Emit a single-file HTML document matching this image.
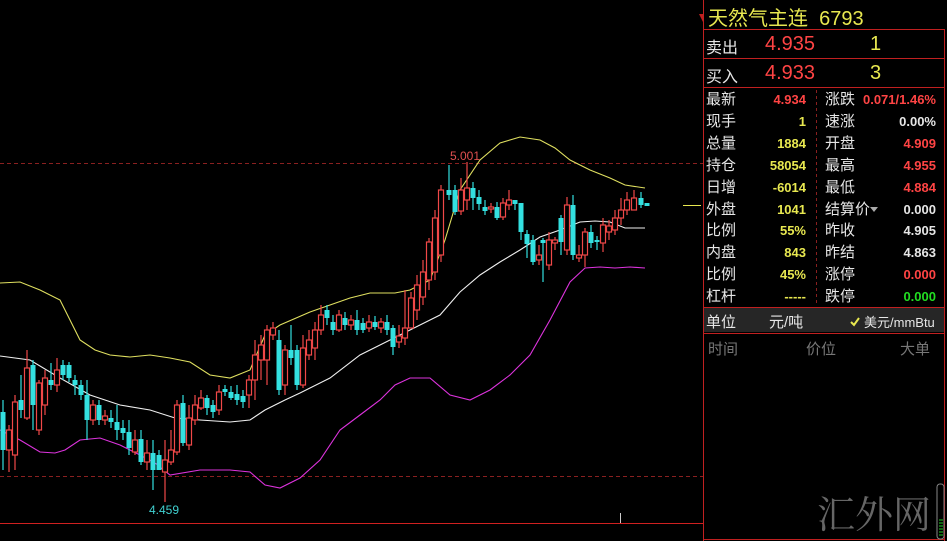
<!DOCTYPE html>
<html><head><meta charset="utf-8"><style>
body{margin:0;width:947px;height:541px;background:#000;overflow:hidden;position:relative;font-family:"Liberation Sans","Noto Sans CJK SC",sans-serif}
.p{position:absolute;white-space:nowrap}
.w{color:#e6e6e6}.r{color:#ff4444}.y{color:#e8e850}.g{color:#22dd22}
.b{font-weight:bold;font-size:13px}
</style></head><body>
<svg class="p" style="left:0;top:0" width="947" height="541">
<line x1="0" y1="163.5" x2="703" y2="163.5" stroke="#8a2020" stroke-dasharray="4,3"/>
<line x1="0" y1="476.5" x2="703" y2="476.5" stroke="#8a2020" stroke-dasharray="4,3"/>
<line x1="0" y1="523.5" x2="703" y2="523.5" stroke="#d02020"/>
<line x1="620.5" y1="513" x2="620.5" y2="523" stroke="#ccc"/>
<line x1="683" y1="205.5" x2="701" y2="205.5" stroke="#e8e850"/>
<polygon points="699,14 703,14 703,22" fill="#c02020"/>
<polyline fill="none" stroke="#e0e060" stroke-width="1.1" points="0,283 20,282 40,290 60,300 80,340 95,350 110,355 130,357 150,355 170,358 190,362 210,375 230,378 250,370 265,335 280,325 310,312 350,298 370,293 395,293 410,290 430,280 445,240 460,190 480,160 500,143 520,137 540,140 555,148 570,160 590,170 610,178 625,185 645,188"/>
<polyline fill="none" stroke="#f0f0f0" stroke-width="1.1" points="0,356 30,360 60,378 90,395 120,405 150,410 175,418 200,420 230,422 250,420 265,410 285,400 300,393 330,378 360,355 380,345 400,335 420,325 440,315 460,292 480,275 500,262 520,250 540,237 560,230 580,222 595,221 610,222 625,228 645,228"/>
<polyline fill="none" stroke="#dd33dd" stroke-width="1.1" points="0,430 20,440 40,452 55,453 65,450 80,440 100,438 120,445 140,455 155,463 170,475 200,470 230,470 250,472 265,485 280,488 300,478 320,460 340,430 360,415 380,400 395,385 410,378 430,378 450,395 470,400 490,390 510,375 530,355 550,320 570,282 585,268 600,267 615,268 630,267 645,268"/>
<g stroke-width="1.2">
<line x1="3" y1="400" x2="3" y2="470" stroke="#33e0e0"/><rect x="0.5" y="412" width="5" height="38" fill="#33e0e0"/>
<line x1="9" y1="425" x2="9" y2="472" stroke="#f04848"/><rect x="6.5" y="430" width="5" height="20" fill="#000" stroke="#f04848"/>
<line x1="15" y1="395" x2="15" y2="470" stroke="#f04848"/><rect x="12.5" y="402" width="5" height="53" fill="#000" stroke="#f04848"/>
<line x1="21" y1="375" x2="21" y2="418" stroke="#33e0e0"/><rect x="18.5" y="400" width="5" height="10" fill="#33e0e0"/>
<line x1="27" y1="350" x2="27" y2="420" stroke="#f04848"/><rect x="24.5" y="368" width="5" height="50" fill="#000" stroke="#f04848"/>
<line x1="33" y1="360" x2="33" y2="430" stroke="#33e0e0"/><rect x="30.5" y="365" width="5" height="40" fill="#33e0e0"/>
<line x1="39" y1="380" x2="39" y2="435" stroke="#f04848"/><rect x="36.5" y="383" width="5" height="47" fill="#000" stroke="#f04848"/>
<line x1="45" y1="370" x2="45" y2="415" stroke="#f04848"/><rect x="42.5" y="378" width="5" height="27" fill="#000" stroke="#f04848"/>
<line x1="51" y1="363" x2="51" y2="390" stroke="#33e0e0"/><rect x="48.5" y="380" width="5" height="5" fill="#33e0e0"/>
<line x1="57" y1="358" x2="57" y2="392" stroke="#f04848"/><rect x="54.5" y="370" width="5" height="15" fill="#000" stroke="#f04848"/>
<line x1="63" y1="360" x2="63" y2="380" stroke="#33e0e0"/><rect x="60.5" y="365" width="5" height="10" fill="#33e0e0"/>
<line x1="69" y1="362" x2="69" y2="382" stroke="#33e0e0"/><rect x="66.5" y="365" width="5" height="13" fill="#33e0e0"/>
<line x1="75" y1="375" x2="75" y2="395" stroke="#33e0e0"/><rect x="72.5" y="380" width="5" height="5" fill="#33e0e0"/>
<line x1="81" y1="380" x2="81" y2="400" stroke="#33e0e0"/><rect x="78.5" y="385" width="5" height="10" fill="#33e0e0"/>
<line x1="87" y1="380" x2="87" y2="440" stroke="#33e0e0"/><rect x="84.5" y="395" width="5" height="25" fill="#33e0e0"/>
<line x1="93" y1="400" x2="93" y2="425" stroke="#f04848"/><rect x="90.5" y="405" width="5" height="15" fill="#000" stroke="#f04848"/>
<line x1="99" y1="400" x2="99" y2="425" stroke="#33e0e0"/><rect x="96.5" y="405" width="5" height="15" fill="#33e0e0"/>
<line x1="105" y1="410" x2="105" y2="425" stroke="#f04848"/><rect x="102.5" y="416" width="5" height="4" fill="#000" stroke="#f04848"/>
<line x1="111" y1="410" x2="111" y2="428" stroke="#33e0e0"/><rect x="108.5" y="418" width="5" height="4" fill="#33e0e0"/>
<line x1="117" y1="405" x2="117" y2="440" stroke="#33e0e0"/><rect x="114.5" y="422" width="5" height="8" fill="#33e0e0"/>
<line x1="123" y1="420" x2="123" y2="440" stroke="#33e0e0"/><rect x="120.5" y="428" width="5" height="5" fill="#33e0e0"/>
<line x1="129" y1="420" x2="129" y2="455" stroke="#33e0e0"/><rect x="126.5" y="432" width="5" height="16" fill="#33e0e0"/>
<line x1="135" y1="430" x2="135" y2="455" stroke="#f04848"/><rect x="132.5" y="440" width="5" height="12" fill="#000" stroke="#f04848"/>
<line x1="141" y1="430" x2="141" y2="465" stroke="#33e0e0"/><rect x="138.5" y="439" width="5" height="23" fill="#33e0e0"/>
<line x1="147" y1="440" x2="147" y2="470" stroke="#f04848"/><rect x="144.5" y="453" width="5" height="9" fill="#000" stroke="#f04848"/>
<line x1="153" y1="440" x2="153" y2="490" stroke="#33e0e0"/><rect x="150.5" y="453" width="5" height="17" fill="#33e0e0"/>
<line x1="159" y1="450" x2="159" y2="470" stroke="#33e0e0"/><rect x="156.5" y="455" width="5" height="15" fill="#33e0e0"/>
<line x1="165" y1="440" x2="165" y2="502" stroke="#f04848"/><rect x="162.5" y="460" width="5" height="12" fill="#000" stroke="#f04848"/>
<line x1="171" y1="430" x2="171" y2="465" stroke="#f04848"/><rect x="168.5" y="450" width="5" height="12" fill="#000" stroke="#f04848"/>
<line x1="177" y1="400" x2="177" y2="455" stroke="#f04848"/><rect x="174.5" y="405" width="5" height="47" fill="#000" stroke="#f04848"/>
<line x1="183" y1="395" x2="183" y2="446" stroke="#33e0e0"/><rect x="180.5" y="403" width="5" height="40" fill="#33e0e0"/>
<line x1="189" y1="405" x2="189" y2="450" stroke="#f04848"/><rect x="186.5" y="418" width="5" height="27" fill="#000" stroke="#f04848"/>
<line x1="195" y1="395" x2="195" y2="425" stroke="#f04848"/><rect x="192.5" y="405" width="5" height="15" fill="#000" stroke="#f04848"/>
<line x1="201" y1="390" x2="201" y2="410" stroke="#f04848"/><rect x="198.5" y="398" width="5" height="10" fill="#000" stroke="#f04848"/>
<line x1="207" y1="395" x2="207" y2="415" stroke="#33e0e0"/><rect x="204.5" y="398" width="5" height="10" fill="#33e0e0"/>
<line x1="213" y1="400" x2="213" y2="418" stroke="#33e0e0"/><rect x="210.5" y="405" width="5" height="7" fill="#33e0e0"/>
<line x1="219" y1="385" x2="219" y2="415" stroke="#f04848"/><rect x="216.5" y="392" width="5" height="18" fill="#000" stroke="#f04848"/>
<line x1="225" y1="385" x2="225" y2="396" stroke="#33e0e0"/><rect x="222.5" y="389" width="5" height="3" fill="#33e0e0"/>
<line x1="231" y1="386" x2="231" y2="400" stroke="#33e0e0"/><rect x="228.5" y="392" width="5" height="6" fill="#33e0e0"/>
<line x1="237" y1="385" x2="237" y2="405" stroke="#33e0e0"/><rect x="234.5" y="394" width="5" height="6" fill="#33e0e0"/>
<line x1="243" y1="390" x2="243" y2="408" stroke="#33e0e0"/><rect x="240.5" y="396" width="5" height="6" fill="#33e0e0"/>
<line x1="249" y1="375" x2="249" y2="408" stroke="#f04848"/><rect x="246.5" y="380" width="5" height="15" fill="#000" stroke="#f04848"/>
<line x1="255" y1="340" x2="255" y2="400" stroke="#f04848"/><rect x="252.5" y="355" width="5" height="25" fill="#000" stroke="#f04848"/>
<line x1="261" y1="335" x2="261" y2="380" stroke="#f04848"/><rect x="258.5" y="345" width="5" height="15" fill="#000" stroke="#f04848"/>
<line x1="267" y1="325" x2="267" y2="385" stroke="#f04848"/><rect x="264.5" y="330" width="5" height="30" fill="#000" stroke="#f04848"/>
<line x1="273" y1="322" x2="273" y2="340" stroke="#f04848"/><rect x="270.5" y="328" width="5" height="7" fill="#000" stroke="#f04848"/>
<line x1="279" y1="330" x2="279" y2="395" stroke="#33e0e0"/><rect x="276.5" y="340" width="5" height="50" fill="#33e0e0"/>
<line x1="285" y1="345" x2="285" y2="395" stroke="#f04848"/><rect x="282.5" y="350" width="5" height="35" fill="#000" stroke="#f04848"/>
<line x1="291" y1="325" x2="291" y2="365" stroke="#33e0e0"/><rect x="288.5" y="350" width="5" height="8" fill="#33e0e0"/>
<line x1="297" y1="345" x2="297" y2="390" stroke="#33e0e0"/><rect x="294.5" y="350" width="5" height="35" fill="#33e0e0"/>
<line x1="303" y1="335" x2="303" y2="388" stroke="#f04848"/><rect x="300.5" y="348" width="5" height="37" fill="#000" stroke="#f04848"/>
<line x1="309" y1="330" x2="309" y2="360" stroke="#f04848"/><rect x="306.5" y="340" width="5" height="15" fill="#000" stroke="#f04848"/>
<line x1="315" y1="322" x2="315" y2="360" stroke="#f04848"/><rect x="312.5" y="330" width="5" height="18" fill="#000" stroke="#f04848"/>
<line x1="321" y1="305" x2="321" y2="335" stroke="#f04848"/><rect x="318.5" y="315" width="5" height="15" fill="#000" stroke="#f04848"/>
<line x1="327" y1="305" x2="327" y2="325" stroke="#33e0e0"/><rect x="324.5" y="310" width="5" height="8" fill="#33e0e0"/>
<line x1="333" y1="315" x2="333" y2="335" stroke="#33e0e0"/><rect x="330.5" y="322" width="5" height="8" fill="#33e0e0"/>
<line x1="339" y1="310" x2="339" y2="332" stroke="#f04848"/><rect x="336.5" y="315" width="5" height="15" fill="#000" stroke="#f04848"/>
<line x1="345" y1="312" x2="345" y2="330" stroke="#33e0e0"/><rect x="342.5" y="318" width="5" height="7" fill="#33e0e0"/>
<line x1="351" y1="315" x2="351" y2="330" stroke="#f04848"/><rect x="348.5" y="320" width="5" height="5" fill="#000" stroke="#f04848"/>
<line x1="357" y1="310" x2="357" y2="335" stroke="#33e0e0"/><rect x="354.5" y="320" width="5" height="10" fill="#33e0e0"/>
<line x1="363" y1="318" x2="363" y2="333" stroke="#33e0e0"/><rect x="360.5" y="323" width="5" height="7" fill="#33e0e0"/>
<line x1="369" y1="315" x2="369" y2="332" stroke="#f04848"/><rect x="366.5" y="322" width="5" height="6" fill="#000" stroke="#f04848"/>
<line x1="375" y1="316" x2="375" y2="330" stroke="#33e0e0"/><rect x="372.5" y="322" width="5" height="5" fill="#33e0e0"/>
<line x1="381" y1="318" x2="381" y2="333" stroke="#f04848"/><rect x="378.5" y="322" width="5" height="6" fill="#000" stroke="#f04848"/>
<line x1="387" y1="315" x2="387" y2="335" stroke="#33e0e0"/><rect x="384.5" y="322" width="5" height="8" fill="#33e0e0"/>
<line x1="393" y1="325" x2="393" y2="355" stroke="#33e0e0"/><rect x="390.5" y="328" width="5" height="19" fill="#33e0e0"/>
<line x1="399" y1="325" x2="399" y2="348" stroke="#f04848"/><rect x="396.5" y="336" width="5" height="6" fill="#000" stroke="#f04848"/>
<line x1="405" y1="290" x2="405" y2="345" stroke="#f04848"/><rect x="402.5" y="328" width="5" height="10" fill="#000" stroke="#f04848"/>
<line x1="411" y1="292" x2="411" y2="322" stroke="#f04848"/><rect x="408.5" y="298" width="5" height="30" fill="#000" stroke="#f04848"/>
<line x1="417" y1="275" x2="417" y2="320" stroke="#f04848"/><rect x="414.5" y="285" width="5" height="25" fill="#000" stroke="#f04848"/>
<line x1="423" y1="260" x2="423" y2="305" stroke="#f04848"/><rect x="420.5" y="272" width="5" height="25" fill="#000" stroke="#f04848"/>
<line x1="429" y1="238" x2="429" y2="290" stroke="#f04848"/><rect x="426.5" y="242" width="5" height="38" fill="#000" stroke="#f04848"/>
<line x1="435" y1="210" x2="435" y2="280" stroke="#f04848"/><rect x="432.5" y="218" width="5" height="54" fill="#000" stroke="#f04848"/>
<line x1="441" y1="185" x2="441" y2="262" stroke="#f04848"/><rect x="438.5" y="190" width="5" height="65" fill="#000" stroke="#f04848"/>
<line x1="449" y1="165" x2="449" y2="200" stroke="#33e0e0"/><rect x="446.5" y="190" width="5" height="5" fill="#33e0e0"/>
<line x1="455" y1="185" x2="455" y2="215" stroke="#33e0e0"/><rect x="452.5" y="190" width="5" height="22" fill="#33e0e0"/>
<line x1="461" y1="178" x2="461" y2="215" stroke="#f04848"/><rect x="458.5" y="190" width="5" height="21" fill="#000" stroke="#f04848"/>
<line x1="467" y1="162" x2="467" y2="210" stroke="#f04848"/><rect x="464.5" y="188" width="5" height="12" fill="#000" stroke="#f04848"/>
<line x1="473" y1="182" x2="473" y2="210" stroke="#33e0e0"/><rect x="470.5" y="188" width="5" height="10" fill="#33e0e0"/>
<line x1="479" y1="190" x2="479" y2="210" stroke="#33e0e0"/><rect x="476.5" y="197" width="5" height="7" fill="#33e0e0"/>
<line x1="485" y1="200" x2="485" y2="215" stroke="#33e0e0"/><rect x="482.5" y="207" width="5" height="4" fill="#33e0e0"/>
<line x1="491" y1="203" x2="491" y2="213" stroke="#f04848"/><rect x="488.5" y="207" width="5" height="2" fill="#000" stroke="#f04848"/>
<line x1="497" y1="202" x2="497" y2="220" stroke="#33e0e0"/><rect x="494.5" y="207" width="5" height="11" fill="#33e0e0"/>
<line x1="503" y1="198" x2="503" y2="220" stroke="#f04848"/><rect x="500.5" y="203" width="5" height="14" fill="#000" stroke="#f04848"/>
<line x1="509" y1="190" x2="509" y2="210" stroke="#f04848"/><rect x="506.5" y="200" width="5" height="5" fill="#000" stroke="#f04848"/>
<line x1="515" y1="200" x2="515" y2="210" stroke="#33e0e0"/><rect x="512.5" y="200" width="5" height="4" fill="#33e0e0"/>
<line x1="521" y1="203" x2="521" y2="240" stroke="#33e0e0"/><rect x="518.5" y="203" width="5" height="29" fill="#33e0e0"/>
<line x1="527" y1="230" x2="527" y2="258" stroke="#33e0e0"/><rect x="524.5" y="234" width="5" height="10" fill="#33e0e0"/>
<line x1="533" y1="235" x2="533" y2="265" stroke="#33e0e0"/><rect x="530.5" y="240" width="5" height="22" fill="#33e0e0"/>
<line x1="539" y1="245" x2="539" y2="265" stroke="#f04848"/><rect x="536.5" y="255" width="5" height="5" fill="#000" stroke="#f04848"/>
<line x1="543" y1="238" x2="543" y2="282" stroke="#33e0e0"/><rect x="540.5" y="240" width="5" height="3" fill="#33e0e0"/>
<line x1="549" y1="232" x2="549" y2="270" stroke="#f04848"/><rect x="546.5" y="240" width="5" height="25" fill="#000" stroke="#f04848"/>
<line x1="555" y1="237" x2="555" y2="250" stroke="#f04848"/><rect x="552.5" y="240" width="5" height="3" fill="#000" stroke="#f04848"/>
<line x1="561" y1="215" x2="561" y2="255" stroke="#33e0e0"/><rect x="558.5" y="218" width="5" height="24" fill="#33e0e0"/>
<line x1="567" y1="197" x2="567" y2="255" stroke="#f04848"/><rect x="564.5" y="205" width="5" height="45" fill="#000" stroke="#f04848"/>
<line x1="573" y1="195" x2="573" y2="260" stroke="#33e0e0"/><rect x="570.5" y="205" width="5" height="50" fill="#33e0e0"/>
<line x1="579" y1="245" x2="579" y2="262" stroke="#f04848"/><rect x="576.5" y="255" width="5" height="3" fill="#000" stroke="#f04848"/>
<line x1="585" y1="228" x2="585" y2="267" stroke="#f04848"/><rect x="582.5" y="232" width="5" height="23" fill="#000" stroke="#f04848"/>
<line x1="591" y1="225" x2="591" y2="248" stroke="#33e0e0"/><rect x="588.5" y="232" width="5" height="11" fill="#33e0e0"/>
<line x1="597" y1="236" x2="597" y2="250" stroke="#33e0e0"/><rect x="594.5" y="240" width="5" height="2" fill="#33e0e0"/>
<line x1="603" y1="218" x2="603" y2="252" stroke="#f04848"/><rect x="600.5" y="225" width="5" height="18" fill="#000" stroke="#f04848"/>
<line x1="609" y1="220" x2="609" y2="240" stroke="#f04848"/><rect x="606.5" y="226" width="5" height="6" fill="#000" stroke="#f04848"/>
<line x1="615" y1="210" x2="615" y2="235" stroke="#f04848"/><rect x="612.5" y="218" width="5" height="12" fill="#000" stroke="#f04848"/>
<line x1="621" y1="198" x2="621" y2="225" stroke="#f04848"/><rect x="618.5" y="210" width="5" height="8" fill="#000" stroke="#f04848"/>
<line x1="627" y1="192" x2="627" y2="215" stroke="#f04848"/><rect x="624.5" y="200" width="5" height="10" fill="#000" stroke="#f04848"/>
<line x1="634" y1="190" x2="634" y2="205" stroke="#f04848"/><rect x="631.5" y="198" width="5" height="12" fill="#000" stroke="#f04848"/>
<line x1="641" y1="192" x2="641" y2="208" stroke="#33e0e0"/><rect x="638.5" y="198" width="5" height="7" fill="#33e0e0"/>
<rect x="644.5" y="203" width="5" height="3" fill="#33e0e0"/>
</g>
<text x="450" y="160" fill="#e05050" font-family="Liberation Sans" font-size="12">5.001</text>
<text x="149" y="514" fill="#40d0d0" font-family="Liberation Sans" font-size="12">4.459</text>
<line x1="703.5" y1="0" x2="703.5" y2="541" stroke="#c02020"/>
<line x1="944.5" y1="29" x2="944.5" y2="541" stroke="#c02020"/>
<line x1="703" y1="29.5" x2="945" y2="29.5" stroke="#c02020"/>
<line x1="703" y1="58.5" x2="945" y2="58.5" stroke="#c02020"/>
<line x1="703" y1="87.5" x2="945" y2="87.5" stroke="#c02020"/>
<line x1="816.5" y1="90" x2="816.5" y2="306" stroke="#8a2020" stroke-dasharray="3,3"/>
<line x1="703" y1="307.5" x2="945" y2="307.5" stroke="#c02020"/>
<rect x="704" y="308" width="240" height="24" fill="#262626"/>
<line x1="703" y1="333.5" x2="945" y2="333.5" stroke="#c02020"/>
<line x1="703" y1="539.5" x2="945" y2="539.5" stroke="#c02020"/>
<rect x="937" y="484" width="7" height="55" rx="3" fill="none" stroke="#888"/>
<g stroke="#22cc22"><line x1="939" y1="520" x2="943" y2="520"/><line x1="939" y1="523" x2="943" y2="523"/><line x1="939" y1="526" x2="943" y2="526"/><line x1="939" y1="529" x2="943" y2="529"/><line x1="939" y1="532" x2="943" y2="532"/><line x1="939" y1="535" x2="943" y2="535"/></g>
<polygon points="870,207 878,207 874,212" fill="#aaa"/>
<path d="M851 322 l3 3 l5 -7" stroke="#e8e850" stroke-width="2" fill="none"/>
</svg>
<div class="p y" style="left:708px;top:2px;font-size:20px">天然气主连&nbsp; 6793</div>
<div class="p w" style="left:706px;top:34px;font-size:16px">卖出</div>
<div class="p r" style="left:765px;top:33px;font-size:20px">4.935</div>
<div class="p y" style="left:870px;top:33px;font-size:20px">1</div>
<div class="p w" style="left:706px;top:63px;font-size:16px">买入</div>
<div class="p r" style="left:765px;top:62px;font-size:20px">4.933</div>
<div class="p y" style="left:870px;top:62px;font-size:20px">3</div>
<div class="p" style="left:0;top:89px;width:947px;font-size:15px;line-height:21.9px">
<div class="p w" style="left:706px;top:0">最新<br>现手<br>总量<br>持仓<br>日增<br>外盘<br>比例<br>内盘<br>比例<br>杠杆</div>
<div class="p b" style="left:730px;width:76px;text-align:right;top:0;line-height:21.9px"><span class="r">4.934</span><br><span class="y">1</span><br><span class="y">1884</span><br><span class="y">58054</span><br><span class="y">-6014</span><br><span class="y">1041</span><br><span class="y">55%</span><br><span class="y">843</span><br><span class="y">45%</span><br><span class="y">-----</span></div>
<div class="p w" style="left:825px;top:0">涨跌<br>速涨<br>开盘<br>最高<br>最低<br>结算价<br>昨收<br>昨结<br>涨停<br>跌停</div>
<div class="p b" style="left:850px;width:86px;text-align:right;top:0;line-height:21.9px"><span class="r">0.071/1.46%</span><br><span class="w">0.00%</span><br><span class="r">4.909</span><br><span class="r">4.955</span><br><span class="r">4.884</span><br><span class="w">0.000</span><br><span class="w">4.905</span><br><span class="w">4.863</span><br><span class="r">0.000</span><br><span class="g">0.000</span></div>
</div>
<div class="p w" style="left:706px;top:311px;font-size:15px">单位</div>
<div class="p w" style="left:769px;top:311px;font-size:15px">元/吨</div>
<div class="p w" style="left:864px;top:312px;font-size:13px">美元/mmBtu</div>
<div class="p" style="left:708px;top:338px;font-size:15px;color:#777">时间</div>
<div class="p" style="left:806px;top:338px;font-size:15px;color:#777">价位</div>
<div class="p" style="left:900px;top:338px;font-size:15px;color:#777">大单</div>
<div class="p" style="left:817px;top:484px;font-size:38px;color:#666;font-family:'Noto Serif CJK SC',serif">汇外网</div>
</body></html>
